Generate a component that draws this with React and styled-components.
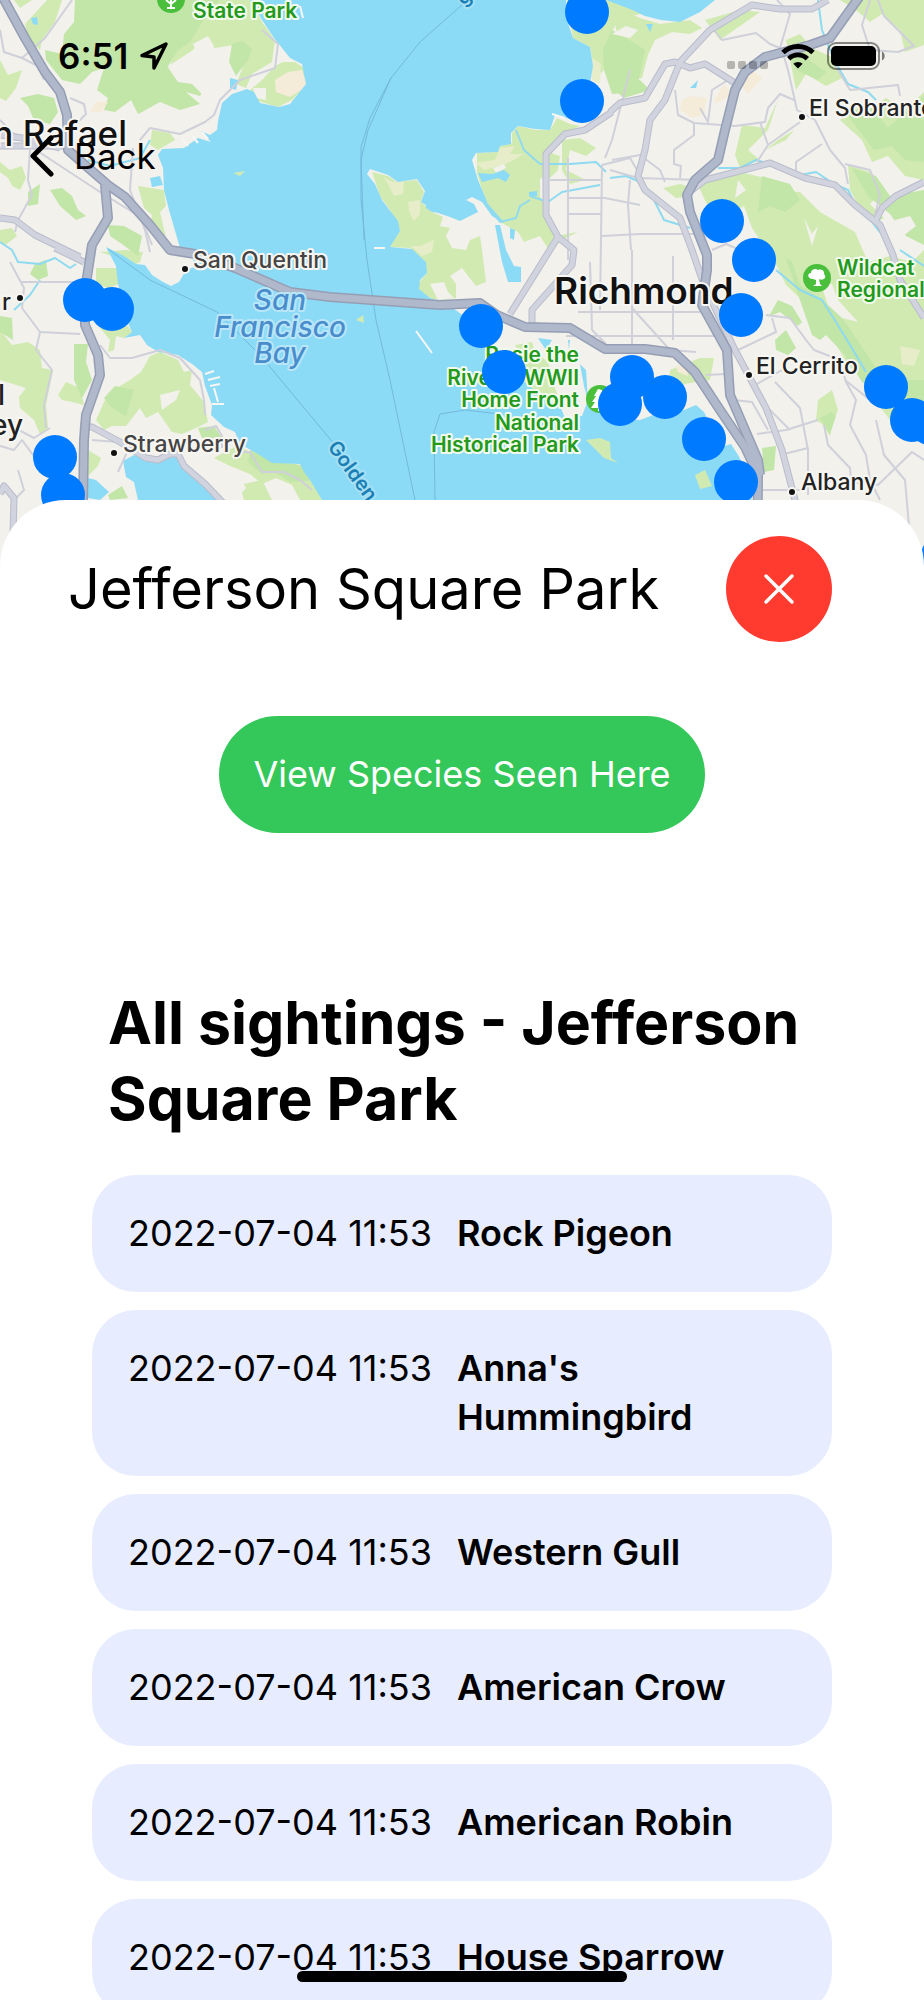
import React from "react";
import styled, { createGlobalStyle } from "styled-components";

const GlobalStyle = createGlobalStyle`
  *, *::before, *::after { box-sizing: border-box; }
  body {
    margin: 0;
    background: #ffffff;
    color: #000000;
    font-family: Inter, "Liberation Sans", sans-serif;
  }
  h1, h2, p, ul { margin: 0; padding: 0; }
  button { border: 0; font: inherit; cursor: pointer; }
`;

const Screen = styled.main`
  display: flex;
  flex-direction: column;
  height: 100vh;
  overflow: hidden;
`;

const MapArea = styled.section`
  display: grid;
  flex: none;
  height: 570px;
  background: #f2f1ec;
`;

const MapDrawing = styled.svg`
  grid-area: 1 / 1;
  display: block;
  width: 100%;
  height: 570px;
`;

const MapChrome = styled.div`
  grid-area: 1 / 1;
  z-index: 1;
`;

const StatusBar = styled.div`
  display: flex;
  align-items: center;
  justify-content: space-between;
  height: 112px;
  padding: 0 38px 0 58px;
`;

const StatusGroup = styled.div`
  display: flex;
  align-items: center;
  gap: 11px;
`;

const Clock = styled.time`
  font-size: 35px;
  font-weight: 600;
  line-height: 40px;
`;

const BackButton = styled.button`
  display: flex;
  align-items: center;
  gap: 20px;
  margin-left: 30px;
  padding: 22px 0;
  background: none;
  color: #000000;
  font-size: 35px;
  line-height: 44px;
`;

const Sheet = styled.section`
  flex: 1;
  min-height: 0;
  margin-top: -70px;
  z-index: 2;
  overflow-y: auto;
  scrollbar-width: none;
  border-radius: 66px 66px 0 0;
  background: #ffffff;
`;

const SheetHeader = styled.header`
  display: flex;
  align-items: center;
  justify-content: space-between;
  padding: 36px 92px 0 68px;
`;

const Title = styled.h1`
  font-size: 56px;
  font-weight: 400;
  line-height: 76px;
`;

const CloseButton = styled.button`
  display: grid;
  place-items: center;
  flex: none;
  width: 106px;
  height: 106px;
  padding: 0;
  border-radius: 50%;
  background: #ff3b30;
  color: #ffffff;
`;

const SpeciesButton = styled.button`
  display: block;
  margin: 74px auto 0;
  padding: 34px;
  border-radius: 60px;
  background: #34c759;
  color: #ffffff;
  font-size: 36px;
  line-height: 49px;
`;

const Sightings = styled.section`
  padding: 152px 92px 36px;
`;

const SightingsTitle = styled.h2`
  padding: 0 16px;
  font-size: 59px;
  font-weight: 700;
  line-height: 76px;
`;

const SightingList = styled.ul`
  display: flex;
  flex-direction: column;
  gap: 18px;
  margin-top: 38px;
  list-style: none;
`;

const SightingRow = styled.li`
  display: flex;
  gap: 18px;
  padding: 34px 36px;
  border-radius: 44px;
  background: #e7ecff;
  font-size: 36px;
  line-height: 49px;
`;

const SightingTime = styled.time`
  flex: none;
  min-width: 311px;
  font-weight: 400;
  white-space: nowrap;
`;

const SpeciesName = styled.span`
  max-width: 300px;
  font-weight: 600;
`;

const HomeIndicator = styled.div`
  position: fixed;
  bottom: 18px;
  left: 50%;
  z-index: 3;
  width: 330px;
  height: 11px;
  margin-left: -165px;
  border-radius: 6px;
  background: #000000;
`;

const Label = styled.text`
  font-family: Inter, "Liberation Sans", sans-serif;
  font-size: ${(p) => p.$size || 23}px;
  font-weight: ${(p) => p.$weight || 500};
  font-style: ${(p) => (p.$italic ? "italic" : "normal")};
  fill: ${(p) => p.$color || "#222222"};
  stroke: ${(p) => p.$halo || "#f7f6f2"};
  stroke-width: 4px;
  stroke-linejoin: round;
  paint-order: stroke;
`;

const lightGreens = [
  "190,0 250,0 262,22 275,40 272,62 252,74 246,88 236,84 245,62 234,45 215,48 203,42 190,52 170,65 180,40",
  "250,90 262,80 275,66 283,62 295,62 304,68 306,85 292,100 278,107 258,101",
  "25,24 47,0 62,0 55,22 42,40 40,50 28,38",
  "0,60 8,75 22,70 16,88 6,101 0,98",
  "32,0 20,8 14,0",
  "0,162 10,170 22,166 26,178 20,190 12,186 8,178 0,172",
  "138,186 164,190 166,206 160,212 166,238 158,236 150,226 152,215 144,208",
  "152,130 170,133 175,140 158,150 150,145",
  "0,230 12,228 17,236 4,246 0,242",
  "96,268 118,268 119,284 108,288 96,284",
  "100,328 128,326 132,332 124,338 116,336 114,350 108,352 110,340",
  "0,330 12,345 28,342 40,350 42,368 53,370 46,405 48,428 40,434 34,420 20,408 19,397 26,388 0,380",
  "96,420 104,402 110,392 130,380 141,372 150,356 160,352 178,360 184,372 192,370 190,385 204,402 208,422 196,428 182,434 172,432 158,412 146,418 140,408 126,426 112,426 104,430",
  "58,395 66,382 80,388 84,405 72,402 62,400",
  "88,450 101,458 98,466 88,476",
  "100,252 125,250 143,252 140,262 132,266 118,258",
  "180,462 196,472 186,478",
  "214,458 238,445 255,455 270,462 300,465 312,478 322,500 300,500 292,485 276,478 262,484 250,474 230,466",
  "240,485 262,480 272,500 244,500",
  "372,172 388,176 397,182 417,180 424,192 421,202 432,212 443,217 440,226 450,228 446,236 452,248 466,250 470,240 480,236 482,250 486,282 476,286 462,268 450,276 456,284 456,298 444,300 432,299 420,292 418,284 427,273 422,260 410,248 390,247 400,230 390,210 380,196",
  "477,153 498,152 500,146 512,143 512,133 518,126 535,130 550,130 557,118 570,124 580,126 560,136 548,152 560,156 558,170 548,180 540,178 540,196 548,214 556,236 578,232 562,240 550,252 540,236 524,242 518,232 500,222 485,200 477,173",
  "567,0 650,0 640,14 618,20 612,32 606,66 602,72 592,80 593,63 590,47 573,38",
  "562,140 580,138 596,148 586,156 570,150 566,170 586,180 570,184 562,170",
  "610,5 640,18 660,24 690,20 702,28 690,34 672,32 655,40 648,55 642,78 624,84 614,74 620,44",
  "735,155 742,125 765,128 778,100 768,130 748,150 760,160 740,168",
  "786,40 800,34 812,48 838,60 842,78 826,86 806,74 796,90 792,70",
  "778,140 794,130 786,140 765,150",
  "705,20 740,10 760,12 720,40",
  "663,188 680,184 694,188 692,196 676,198",
  "698,185 740,172 765,178 774,190 800,192 820,212 855,232 868,262 890,256 912,262 924,250 924,440 890,420 872,396 862,380 846,362 836,344 815,318 802,300 786,285 775,262 752,228 744,206 715,222",
  "840,0 924,0 924,45 905,52 900,30 882,14 870,22 856,10",
  "840,120 852,108 870,110 886,98 905,110 924,92 924,180 905,176 888,156 872,162 862,140",
  "848,165 870,172 884,190 870,204 884,218 875,224 860,208 850,190",
  "818,400 832,390 838,410 832,425 830,436 822,424 816,420",
  "670,370 700,358 714,358 710,380 684,384 668,398",
  "515,345 532,342 535,352 548,362 555,388 560,402 540,392 520,388 528,372",
];

const darkGreens = [
  "75,0 220,0 206,16 190,42 178,50 168,66 185,80 204,88 200,96 186,92 200,104 180,110 160,102 142,112 138,114 131,100 115,112 104,110 108,98 97,90 104,68 92,72 80,84 62,80 46,60 45,50 62,54 64,34 74,22",
  "229,62 232,44 243,41 252,49 248,60 236,76",
  "20,98 38,94 54,98 58,112 50,124 34,120 28,106",
  "50,190 62,188 72,196 78,210 86,216 76,220 60,206",
  "28,192 40,184 38,204 28,206",
  "108,225 124,226 142,236 138,256 122,244 110,236",
  "35,264 46,260 48,276 38,280 30,274",
  "74,344 88,344 86,362 92,380 82,398 74,380",
  "104,398 115,386 134,390 126,416 112,408",
  "0,316 12,318 13,340 0,332",
  "198,428 214,426 222,438 202,438",
  "250,450 282,462 300,465 314,480 290,482 275,472 262,474 248,462",
  "108,495 122,486 128,498 110,500",
  "603,50 612,30 626,38 645,50 640,74 636,92 612,94 604,70",
  "612,88 640,80 650,90 624,98",
  "786,48 802,42 806,58 826,72 818,80 796,70",
  "845,112 872,108 888,128 906,112 924,96 924,162 905,160 892,146 874,150",
  "852,168 876,176 890,196 924,190 924,245 906,236 890,214 868,196",
  "768,248 786,258 800,300 812,335 820,340 826,335 845,355 862,382 880,392 900,398 924,420 924,380 884,380 864,350 840,315 822,300 800,285 792,262",
  "762,176 790,184 800,200 785,212 770,206 758,212",
  "768,318 778,300 792,306 802,322 798,326 780,312 770,316",
  "775,340 786,330 796,348 788,355 776,350",
  "762,448 776,446 774,470 764,472",
  "820,418 832,412 836,416 830,434",
];

const creamPatches = [
  "275,80 288,72 302,70 307,86 290,97 276,92",
  "90,112 96,102 108,102 102,112",
  "682,100 692,96 707,98 704,114 692,118 680,110",
  "714,100 724,84 732,94 716,104",
  "742,86 752,70 762,78 748,94",
  "676,366 686,364 688,376 678,372",
];

const khakiPatches = [
  "383,177 392,182 404,180 403,194 394,196 388,184",
  "408,202 420,200 420,214 414,221 409,212",
  "411,246 420,246 434,240 432,252 422,256",
  "476,163 495,160 500,148 515,146 510,154 524,154 506,164 484,170",
  "592,58 601,64 600,84 592,80",
  "900,346 920,350 914,366 902,364",
];

const landPatches = [
  "167,66 178,72 192,78 196,60 210,54 212,70 204,74 214,86 204,96 192,84 178,82",
  "193,44 208,36 214,46 204,54 212,62 200,60",
  "253,88 266,88 266,100 256,98",
  "430,284 444,282 448,292 454,298 438,300",
  "493,168 504,164 506,168 496,173",
  "804,218 812,234 818,226 812,246",
  "820,282 832,284 838,300 858,322 842,318 828,305",
  "612,34 626,26 638,30 630,38",
  "738,180 746,190 735,198",
  "895,220 910,216 916,226 898,240",
  "222,490 240,478 246,488 232,504 222,500",
  "160,395 180,390 176,400 162,410",
];

const islands = [
  "695,475 705,470 712,486 700,489",
  "586,440 600,438 610,442 611,458 618,463 604,458",
  "356,320 363,315 364,323",
  "233,173 245,171 240,176",
];

const thinRoads = [
  "0,30 4,52 22,58 45,38 72,0", "22,58 38,66 44,80", "70,98 84,104 86,114 76,124",
  "0,120 14,134 30,138", "30,150 28,180 32,195 18,220 15,232", "70,152 92,170 140,215 152,245",
  "36,150 100,192 155,226", "133,148 130,190 145,230 150,252", "140,140 150,128 180,134 205,122 214,115 220,100 240,80 275,68 278,44 262,30",
  "20,282 80,282", "10,262 24,288 22,308 40,332 36,350 52,370 44,405 46,428", "40,332 80,334",
  "100,345 110,358 132,358 160,350 180,358 200,380 204,400 205,415", "0,420 34,438 50,428", "0,446 14,450 22,440 44,470",
  "18,470 24,490 14,500", "92,440 118,442 128,450 118,472", "205,430 216,426 222,436 222,448",
  "236,452 250,452 262,472 284,472 300,480 312,490",
  "568,158 568,260", "602,165 600,310", "550,180 602,180", "568,198 605,198 640,205", "568,214 602,214",
  "602,236 640,234 712,234", "632,250 632,345", "578,312 700,312", "566,336 720,336", "590,262 592,330 606,344",
  "673,256 673,340", "632,308 670,350 696,352", "605,158 612,140 630,70", "602,165 630,158 640,175",
  "630,180 628,205 631,250", "612,160 640,155 660,170 665,182", "675,90 678,115 694,123 735,126 765,122 768,108 780,94 794,100",
  "694,124 694,135 674,150 674,164 681,166 680,178", "777,0 790,14 780,48", "714,30 722,40 756,33 770,44 780,48",
  "782,50 788,70 797,110 815,120 830,150 845,168 848,184", "800,122 768,145 757,162", "760,122 768,145", "796,178 796,162 822,144",
  "870,0 862,25 870,50 898,52 914,46 884,16 878,0", "832,60 850,90 898,85 900,96", "845,164 870,170 880,195 875,215",
  "700,108 708,122 712,90 728,80", "610,170 638,178 700,180", "712,250 726,244 740,250 750,266",
  "766,315 790,318 806,340 814,350 840,360 846,382 856,400 850,425 866,455 870,480 880,500",
  "738,350 776,332 772,318", "755,385 782,370", "775,382 800,408 808,450 808,495", "757,434 786,430 818,420", "824,425 828,445 850,468 852,490",
  "766,406 790,430", "784,454 808,448", "820,480 878,485 912,452 924,460", "762,490 802,490",
  "706,375 725,374", "734,400 752,402 768,430", "876,420 884,455 905,480 912,560", "845,380 870,400",
];

const mainRoads = [
  "0,218 15,220 35,235 80,257",
  "80,426 92,427 120,442 146,458 158,460 170,454 178,454 184,466 205,484 226,506",
  "0,494 4,486 14,498 12,570",
  "55,248 84,262",
  "0,135 22,138 60,148",
  "0,146 66,146",
  "610,112 620,103 645,98 665,64 675,62 690,68 705,64 735,83",
  "828,0 812,9 780,9 752,5 710,30 680,62 665,100 650,120 645,150 638,176 645,190 680,218 692,250 704,285 735,350 766,408 782,450 795,500 800,570",
  "612,112 585,130 565,134 546,154 546,215 558,237 574,250 572,265 532,310 532,325",
  "558,237 510,314",
  "692,190 705,180 770,163 805,178 835,185 855,205 880,225 893,255 900,280 924,318",
  "876,220 882,208 896,196 924,182",
];

const highways = [
  "2,-4 25,38 45,72 60,92 67,115 68,150 85,165 108,185 125,197 150,225 170,250 195,254 235,268 290,292 330,297 440,305 480,303 497,315 525,327 570,328 605,349 645,349 675,353 695,372 720,410 745,447 758,475 757,570",
  "105,185 108,218 92,245 85,290 85,325 98,355 100,375 86,415 84,440 82,570",
  "860,-4 830,38 810,45 765,57 745,72 735,90 725,130 718,160 695,180 687,195 690,212 707,255 707,270 702,305 727,350 730,395 745,430 758,460 760,475",
];

const creeks = [
  "0,242 12,250 18,262 40,264 55,258 70,268 76,264",
  "88,160 110,166 140,158 150,140", "40,280 30,295 14,310",
  "516,130 524,150 540,164 570,164 596,162 606,172", "530,196 548,202 562,192 600,185",
  "484,202 500,222 516,218 520,206 530,200",
  "610,178 626,176 640,182 654,200 664,220 690,228", "718,168 740,168 756,160 770,164",
  "818,0 822,30 834,60 848,84 868,92 876,100", "800,175 816,172 834,184 848,190 858,210 872,222 886,240",
  "776,270 800,290 822,300 836,322 850,345 866,372", "900,250 924,266",
];

const pins = [
  [587, 12], [582, 101], [722, 221], [754, 260], [741, 315], [481, 326], [504, 372],
  [632, 377], [620, 404], [665, 397], [704, 439], [736, 482], [886, 387], [912, 420],
  [930, 423], [85, 300], [112, 309], [55, 457], [63, 495], [943, 556],
];

const towns = [[20, 298], [185, 269], [114, 453], [802, 117], [749, 375], [792, 492]];

const greenText = { $size: 21, $weight: 600, $color: "#23991d", $halo: "#f2faec" };
const bayText = { $size: 28, $weight: 500, $italic: true, $color: "#4a8dcc", $halo: "#b9e6f8", textAnchor: "middle" };
const routeText = { $size: 20, $weight: 600, $color: "#1c7fb4", $halo: "#a5e0f5" };

const Shapes = ({ items, fill }) => (
  <g fill={fill}>{items.map((points) => <polygon key={points} points={points} />)}</g>
);

const Lines = ({ items, color, width }) => (
  <g fill="none" stroke={color} strokeWidth={width} strokeLinejoin="round">
    {items.map((points) => <polyline key={points} points={points} />)}
  </g>
);

const BayMap = () => (
  <MapDrawing viewBox="0 0 924 570" preserveAspectRatio="xMidYMin slice" role="img" aria-label="Map of San Francisco Bay">
    <rect width="924" height="570" fill="#f2f1ec" />
    <Shapes items={lightGreens} fill="#d1eab2" />
    <Shapes items={darkGreens} fill="#c2e5a8" />
    <Shapes items={creamPatches} fill="#f5ebd9" />
    <Shapes items={khakiPatches} fill="#e7edc8" />
    <Shapes items={landPatches} fill="#f2f1ec" />
    <g fill="#8cdbf6">
      <path d="M250 0 262 20 274 38 290 58 302 64 306 84 290 104 279 107 260 103 254 92 247 89 232 94 222 103 218 121 217 130 210 135 201 131 211 142 198 138 184 148 162 149 158 155 163 168 164 190 169 210 180 248 193 255 194 267 186 270 179 282 171 286 163 282 152 275 145 265 136 264 124 256 106 247 116 266 118 284 126 318 132 332 124 338 140 335 147 345 158 352 178 355 192 364 202 372 205 386 212 405 211 415 224 427 235 432 240 444 258 454 272 463 300 464 304 472 310 480 322 500 326 570 748 570 752 490 746 470 738 455 731 444 724 446 718 440 704 412 696 405 684 410 656 414 640 420 610 418 600 408 588 402 586 370 580 364 584 386 588 400 582 416 565 418 560 406 540 395 520 378 500 365 488 345 474 324 457 311 445 303 430 298 419 289 420 280 427 273 426 262 412 249 390 247 400 231 398 221 388 208 382 200 375 184 367 174 370 169 388 175 398 182 417 179 425 191 421 202 438 213 450 217 460 221 478 212 474 204 466 200 472 197 482 202 492 216 504 223 502 220 488 204 478 180 472 160 476 153 498 152 500 146 511 144 511 133 518 126 535 129 550 130 555 115 570 119 580 100 590 84 593 66 590 47 573 38 567 20 566 0Z" />
      <path d="M606 0 630 9 645 16 661 20 680 22 700 12 715 0Z" />
      <path d="M123 461 134 455 146 460 162 458 176 457 188 470 206 486 222 500 222 570 138 570 138 500 134 482 126 477Z" />
      <path d="M88 478 96 480 109 492 100 500 88 498Z" />
      <path d="M150 178 160 176 163 185 152 187ZM31 18 37 17 38 25 33 24ZM230 78 238 80 236 90 230 88ZM478 173 492 174 504 170 510 175 506 182 498 178 482 182ZM426 202 440 213 432 212 426 208ZM495 225 500 225 506 250 514 266 521 267 521 282 508 282 502 262ZM510 228 515 230 514 240 510 238ZM529 192 537 191 537 196 529 196ZM646 24 653 24 650 32ZM690 88 698 80 696 88ZM538 338 552 340 546 350ZM568 340 570 340 569 350Z" />
    </g>
    <Shapes items={islands} fill="#d1eab2" />
    <g fill="none" stroke="#f7f6f2" strokeWidth="2">
      <path d="M416 331 432 353M205 374 214 371M208 380 220 377M210 386 220 384M212 404 224 404M214 388 218 402M385 248 374 248M552 114 565 118M300 6 303 18" />
      <path d="M182 140 188 146M192 136 198 143M202 132 208 139" />
    </g>
    <g fill="none" stroke="#72b9dc" strokeWidth="1">
      <path d="M463 4 420 42 391 78 370 118 361 147 361 200 367 260 376 320 390 380 415 500" />
      <path d="M391 78 368 130 361 160 364 240M108 249 150 280 217 312 260 355 310 415 335 445M435 500 434 432 440 414 465 410 500 414" />
    </g>
    <Lines items={creeks} color="#8edaf0" width="2" />
    <Lines items={thinRoads} color="#cfd0da" width="2" />
    <Lines items={mainRoads} color="#b9bccb" width="7" />
    <Lines items={mainRoads} color="#d1d3df" width="5" />
    <Lines items={highways} color="#959eb4" width="10" />
    <Lines items={highways} color="#b0b8cb" width="7" />

    <circle cx="171" cy="-1" r="14" fill="#49bf3b" />
    <path d="M171 8V0M166 0 171 4 176 0M167 8H175" fill="none" stroke="#ffffff" strokeWidth="2" />
    <circle cx="600" cy="399" r="14" fill="#49bf3b" />
    <path d="M598 389 594 396H596L592 402H595L591 408H598V411H602V390Z" fill="#ffffff" />
    <circle cx="817" cy="278" r="14" fill="#49bf3b" />
    <path d="M813 279C807 279 807 273 811 273 811 269 816 268 818 270 823 268 825 273 824 274 828 278 822 281 819 279L820 284 822 286H813L816 284V280Z" fill="#ffffff" />

    {towns.map(([x, y]) => (
      <circle key={`${x}-${y}`} cx={x} cy={y} r="4" fill="#111111" stroke="#f7f6f2" strokeWidth="2" />
    ))}

    <Label {...greenText} x="193" y="18">State Park</Label>
    <Label x="127" y="146" textAnchor="end" $size={35} $color="#111111">San Rafael</Label>
    <Label x="193" y="268" $color="#444444">San Quentin</Label>
    <Label {...bayText} x="280" y="310">San</Label>
    <Label {...bayText} x="280" y="337">Francisco</Label>
    <Label {...bayText} x="280" y="363">Bay</Label>
    <Label x="11" y="310" textAnchor="end">r</Label>
    <Label x="5" y="405" textAnchor="end" $size={28}>Mill</Label>
    <Label x="23" y="435" textAnchor="end" $size={28}>Valley</Label>
    <Label x="123" y="452" $color="#444444">Strawberry</Label>
    <Label x="554" y="304" $size={37} $weight={600} $color="#111111">Richmond</Label>
    <Label x="809" y="116">El Sobrante</Label>
    <Label x="756" y="374">El Cerrito</Label>
    <Label x="801" y="490">Albany</Label>
    <Label {...greenText} x="837" y="275">Wildcat</Label>
    <Label {...greenText} x="837" y="297">Regional</Label>
    <g textAnchor="end">
      <Label {...greenText} x="579" y="362">Rosie the</Label>
      <Label {...greenText} x="579" y="385">Riveter WWII</Label>
      <Label {...greenText} x="579" y="407">Home Front</Label>
      <Label {...greenText} x="579" y="430">National</Label>
      <Label {...greenText} x="579" y="452">Historical Park</Label>
    </g>
    <Label {...routeText} transform="translate(327 447) rotate(54)">Golden Gate</Label>
    <Label {...routeText} transform="translate(463 6) rotate(-38)">g</Label>

    <g fill="#007aff">
      {pins.map(([x, y]) => <circle key={`${x}-${y}`} cx={x} cy={y} r="22" />)}
    </g>
  </MapDrawing>
);

const LocationArrow = () => (
  <svg width="30" height="30" viewBox="0 0 30 30" fill="none" stroke="#000000" strokeWidth="3.500" strokeLinejoin="round" aria-hidden="true">
    <path d="M27 3 3 14.500 15 16V27Z" />
  </svg>
);

const SignalDots = () => (
  <svg width="42" height="26" viewBox="0 0 42 26" fill="#000000" fillOpacity="0.25" aria-hidden="true">
    <rect x="0" y="18" width="8" height="8" rx="2" />
    <rect x="11" y="18" width="8" height="8" rx="2" />
    <rect x="22" y="18" width="8" height="8" rx="2" />
    <rect x="33" y="18" width="8" height="8" rx="2" />
  </svg>
);

const WifiIcon = () => (
  <svg width="36" height="26" viewBox="0 0 36 26" aria-hidden="true">
    <path d="M3 9.5A21.5 21.5 0 0 1 33 9.5" fill="none" stroke="#000000" strokeWidth="5" />
    <path d="M8.7 15.8A13.2 13.2 0 0 1 27.3 15.8" fill="none" stroke="#000000" strokeWidth="4.8" />
    <path d="M18 25.500 13.300 20.700A7 7 0 0 1 22.700 20.700Z" />
  </svg>
);

const BatteryIcon = () => (
  <svg width="59" height="28" viewBox="0 0 59 28" aria-hidden="true">
    <rect x="1" y="1" width="51" height="26" rx="8" fill="none" stroke="#000000" strokeOpacity="0.45" strokeWidth="2" />
    <rect x="4" y="4" width="45" height="20" rx="5" />
    <path d="M55 9.500C58.500 11 58.500 17 55 18.500Z" fillOpacity="0.5" />
  </svg>
);

const BackChevron = () => (
  <svg width="24" height="42" viewBox="0 0 24 42" fill="none" stroke="#000000" strokeWidth="5" strokeLinecap="round" strokeLinejoin="round" aria-hidden="true">
    <path d="M21 3 3 21 21 39" />
  </svg>
);

const CloseIcon = () => (
  <svg width="32" height="32" viewBox="0 0 32 32" fill="none" stroke="currentColor" strokeWidth="3.500" strokeLinecap="round" aria-hidden="true">
    <path d="M3 3 29 29M29 3 3 29" />
  </svg>
);

const park = "Jefferson Square Park";
const seenAt = "2022-07-04 11:53";
const species = ["Rock Pigeon", "Anna's Hummingbird", "Western Gull", "American Crow", "American Robin", "House Sparrow"];

export default function App() {
  return (
    <>
      <GlobalStyle />
      <Screen>
        <MapArea>
          <BayMap />
          <MapChrome>
            <StatusBar>
              <StatusGroup>
                <Clock>6:51</Clock>
                <LocationArrow />
              </StatusGroup>
              <StatusGroup>
                <SignalDots />
                <WifiIcon />
                <BatteryIcon />
              </StatusGroup>
            </StatusBar>
            <BackButton type="button">
              <BackChevron />
              Back
            </BackButton>
          </MapChrome>
        </MapArea>
        <Sheet>
          <SheetHeader>
            <Title>{park}</Title>
            <CloseButton type="button" aria-label="Close">
              <CloseIcon />
            </CloseButton>
          </SheetHeader>
          <SpeciesButton type="button">View Species Seen Here</SpeciesButton>
          <Sightings>
            <SightingsTitle>All sightings - {park}</SightingsTitle>
            <SightingList>
              {species.map((name) => (
                <SightingRow key={name}>
                  <SightingTime dateTime="2022-07-04T11:53">{seenAt}</SightingTime>
                  <SpeciesName>{name}</SpeciesName>
                </SightingRow>
              ))}
            </SightingList>
          </Sightings>
        </Sheet>
        <HomeIndicator />
      </Screen>
    </>
  );
}
